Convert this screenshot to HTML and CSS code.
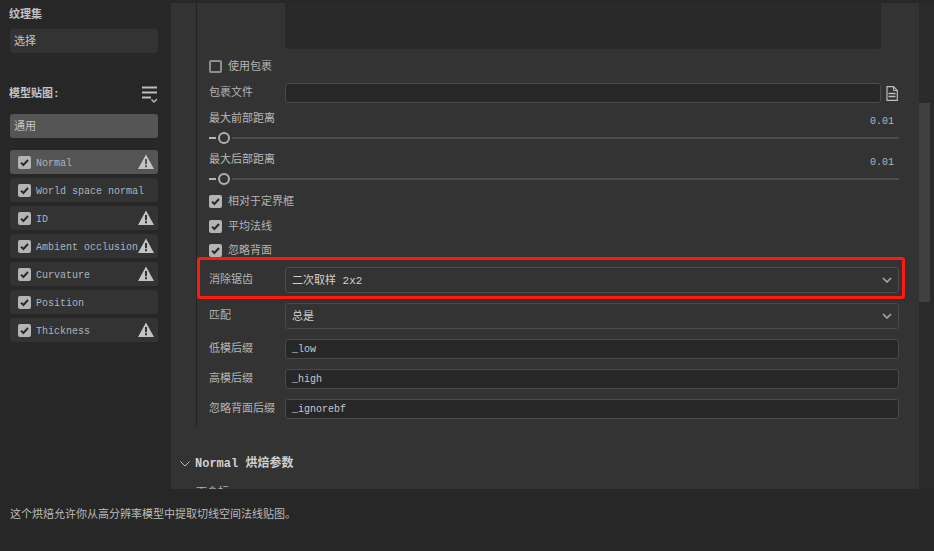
FILE: index.html
```html
<!DOCTYPE html>
<html lang="zh">
<head>
<meta charset="utf-8">
<title>烘焙</title>
<link rel="stylesheet" href="styles.css">
</head>
<body>
<svg class="defs" width="0" height="0" aria-hidden="true">
  <symbol id="tick" viewBox="0 0 13 13"><path d="M3 6.6 5.4 9 10 4" fill="none" stroke="#2b2b2b" stroke-width="2"/></symbol>
  <symbol id="warn" viewBox="0 0 16 15"><path fill-rule="evenodd" d="M8 0.5 16 15H0ZM7 5v5.2h2V5ZM7 11.2v2h2v-2Z" fill="#c4c4c4"/></symbol>
  <symbol id="chev" viewBox="0 0 10 6"><path d="M1 1l4 4 4-4" fill="none" stroke="#a8a8a8" stroke-width="1.6"/></symbol>
</svg>
<div class="app">
  <aside class="side">
    <div class="side-title first">纹理集</div>
    <div class="side-box">选择</div>
    <div class="side-head">
      <span class="side-title">模型贴图:</span>
      <svg class="list-icon" width="17" height="17" viewBox="0 0 17 17"><path d="M1 1.500h15M1 6.500h15M1 11.500h9" stroke="#bdbdbd" stroke-width="1.800" fill="none"/><path d="M10.500 13.500l2.500 2.500 3-3" stroke="#bdbdbd" stroke-width="1.400" fill="none"/></svg>
    </div>
    <div class="side-box active">通用</div>
    <ul class="maps">
      <li class="map on"><span class="check"><svg width="13" height="13"><use href="#tick"/></svg></span><span class="map-name">Normal</span><svg class="warn" width="16" height="15"><use href="#warn"/></svg></li>
      <li class="map"><span class="check"><svg width="13" height="13"><use href="#tick"/></svg></span><span class="map-name">World space normal</span></li>
      <li class="map"><span class="check"><svg width="13" height="13"><use href="#tick"/></svg></span><span class="map-name">ID</span><svg class="warn" width="16" height="15"><use href="#warn"/></svg></li>
      <li class="map"><span class="check"><svg width="13" height="13"><use href="#tick"/></svg></span><span class="map-name">Ambient occlusion</span><svg class="warn" width="16" height="15"><use href="#warn"/></svg></li>
      <li class="map"><span class="check"><svg width="13" height="13"><use href="#tick"/></svg></span><span class="map-name">Curvature</span><svg class="warn" width="16" height="15"><use href="#warn"/></svg></li>
      <li class="map"><span class="check"><svg width="13" height="13"><use href="#tick"/></svg></span><span class="map-name">Position</span></li>
      <li class="map"><span class="check"><svg width="13" height="13"><use href="#tick"/></svg></span><span class="map-name">Thickness</span><svg class="warn" width="16" height="15"><use href="#warn"/></svg></li>
    </ul>
  </aside>

  <main class="panel">
    <section class="group">
      <div class="preview-row"><div class="preview"></div></div>
      <label class="check-row first-check"><span class="check off"></span>使用包裹</label>
      <div class="row file-row">
        <span class="label">包裹文件</span>
        <div class="input"></div>
        <svg class="file-icon" width="12" height="15" viewBox="0 0 12 15"><path d="M1 .7h6.500L11.300 4.500V14.300H1Z" fill="none" stroke="#bdbdbd" stroke-width="1.200"/><path d="M7.500 1V4.500H11" fill="none" stroke="#bdbdbd"/><path d="M2.500 7.500h7M2.500 10.500h7" stroke="#bdbdbd" stroke-width="1.500"/></svg>
      </div>
      <div class="slider-block">
        <div class="slider-top"><span>最大前部距离</span><span class="value">0.01</span></div>
        <div class="slider"><span class="dash"></span><span class="knob"></span><span class="track"></span></div>
      </div>
      <div class="slider-block second">
        <div class="slider-top"><span>最大后部距离</span><span class="value">0.01</span></div>
        <div class="slider"><span class="dash"></span><span class="knob"></span><span class="track"></span></div>
      </div>
      <label class="check-row gap-a"><span class="check"><svg width="13" height="13"><use href="#tick"/></svg></span>相对于定界框</label>
      <label class="check-row gap-b"><span class="check"><svg width="13" height="13"><use href="#tick"/></svg></span>平均法线</label>
      <label class="check-row"><span class="check"><svg width="13" height="13"><use href="#tick"/></svg></span>忽略背面</label>
      <div class="row select-row aa">
        <span class="label">消除锯齿</span>
        <div class="select"><span class="bright">二次取样 2x2</span><svg width="10" height="6"><use href="#chev"/></svg></div>
      </div>
      <div class="row select-row match">
        <span class="label">匹配</span>
        <div class="select"><span class="bright">总是</span><svg width="10" height="6"><use href="#chev"/></svg></div>
      </div>
      <div class="row text-row low"><span class="label">低模后缀</span><div class="input wide">_low</div></div>
      <div class="row text-row"><span class="label">高模后缀</span><div class="input wide">_high</div></div>
      <div class="row text-row"><span class="label">忽略背面后缀</span><div class="input wide">_ignorebf</div></div>
    </section>
    <h2 class="section-head">
      <svg width="10" height="6" viewBox="0 0 10 6"><path d="M.5.5 5 5 9.500.5" fill="none" stroke="#bdbdbd"/></svg>
      Normal 烘焙参数
    </h2>
    <div class="clipped">下盒标</div>
  </main>

  <div class="scroll"><div class="thumb"></div></div>
  <div class="highlight"></div>

  <footer class="foot">这个烘焙允许你从高分辨率模型中提取切线空间法线贴图。</footer>
</div>
</body>
</html>
```

FILE: styles.css
```css
* { box-sizing: border-box; }
html, body { margin: 0; height: 100%; }
body {
  background: #272727;
  color: #b9b9b9;
  font: 11px/14px "Liberation Mono", "Noto Sans CJK SC", monospace;
  overflow: hidden;
}
.defs { position: absolute; }
.app {
  position: relative;
  width: 934px;
  height: 551px;
  display: grid;
  grid-template-columns: 171px 748px 15px;
  grid-template-rows: 489px 62px;
}
.side { padding: 8px 13px 0 10px; overflow: hidden; }
.side-title { font-weight: 700; color: #c2c2c2; margin-left: -1px; display: block; margin-top: -2px; }
.side-title.first { height: 21px; margin-top: 0; }
.side-box {
  height: 24px;
  background: #333;
  border-radius: 3px;
  padding: 6px 4px 0;
  color: #c4c4c4;
}
.side-head {
  display: flex;
  justify-content: space-between;
  align-items: center;
  height: 17px;
  margin-top: 33px;
  margin-bottom: 11px;
}
.side-box.active { background: #555; }
.maps { list-style: none; margin: 12px 0 0; padding: 0; display: grid; gap: 4px; }
.map {
  height: 24px;
  background: #333;
  border-radius: 3px;
  display: flex;
  align-items: center;
  padding-left: 8px;
  position: relative;
}
.map.on { background: #555; }
.map-name { font-size: 10px; margin-left: 5px; padding-top: 4px; color: #aab4bd; white-space: nowrap; }
.warn { position: absolute; right: 4px; top: 4px; }
.check {
  width: 13px;
  height: 13px;
  border-radius: 2px;
  background: #b4b4b4;
  flex: none;
  display: block;
}
.check svg { display: block; }
.check.off { background: transparent; border: 2px solid #8e8e8e; }

.panel {
  margin-top: 3px;
  background: #333;
  overflow: hidden;
  padding-left: 25px;
}
.group {
  border-left: 1px solid #232323;
  padding: 0 20px 8px 12px;
}
.preview-row { padding-left: 76px; padding-right: 18px; }
.preview {
  height: 46px;
  background: #292929;
  border-radius: 0 0 3px 3px;
}
.check-row {
  display: flex;
  align-items: center;
  gap: 6px;
  height: 24px;
  padding-top: 2px;
  color: #b4b4b4;
}
.check-row .check { margin-top: -2px; }
.first-check { margin-top: 5px; }
.gap-a { margin-top: 3px; }
.gap-b { margin-top: 1px; }
.row { display: flex; align-items: center; }
.label { width: 76px; flex: none; color: #b4b4b4; white-space: nowrap; }
.input {
  flex: 1;
  height: 20px;
  background: #272727;
  border: 1px solid #4a4a4a;
  border-radius: 3px;
  padding: 3px 6px 0;
  color: #c8c8c8;
  font-size: 10px;
}
.file-row { margin-top: 5px; }
.file-icon { margin-left: 5px; margin-right: 1px; flex: none; }
.slider-block { margin-top: 9px; }
.slider-block.second { margin-top: 8px; }
.slider-top { display: flex; justify-content: space-between; height: 14px; }
.value { font-size: 10px; color: #b0b4b8; padding: 3px 5px 0 0; }
.slider { display: flex; align-items: center; height: 14px; margin-top: 5px; }
.dash { width: 7px; height: 2px; background: #b4b4b4; flex: none; }
.knob { width: 12px; height: 12px; border: 2px solid #b0b0b0; border-radius: 50%; margin-left: 2px; flex: none; }
.track { flex: 1; height: 2px; background: #4c4c4c; margin-left: 2px; }
.select {
  flex: 1;
  height: 26px;
  border: 1px solid #4a4a4a;
  border-radius: 3px;
  background: #333;
  display: flex;
  align-items: center;
  justify-content: space-between;
  padding: 0 6px;
}
.bright { color: #d0d0d0; padding-top: 2px; }
.aa { margin-top: 5px; }
.match { margin-top: 10px; }
.text-row { margin-top: 10px; }
.section-head {
  margin: 30px 0 0 -16px;
  font-size: 12px;
  line-height: 14px;
  font-weight: 700;
  color: #d0d0d0;
  display: flex;
  align-items: center;
  gap: 5px;
}
.clipped { margin-top: 15px; color: #b4b4b4; }

.scroll { background: #2a2a2a; margin-top: 3px; }
.thumb { width: 11px; height: 199px; margin-top: 100px; background: #404040; }

.highlight {
  position: absolute;
  left: 197px;
  top: 257px;
  width: 708px;
  height: 42px;
  border: 3px solid #ff1a10;
  border-radius: 3px;
}
.foot {
  grid-column: 1 / -1;
  padding: 19px 0 0 10px;
  color: #bcbcbc;
}
```
